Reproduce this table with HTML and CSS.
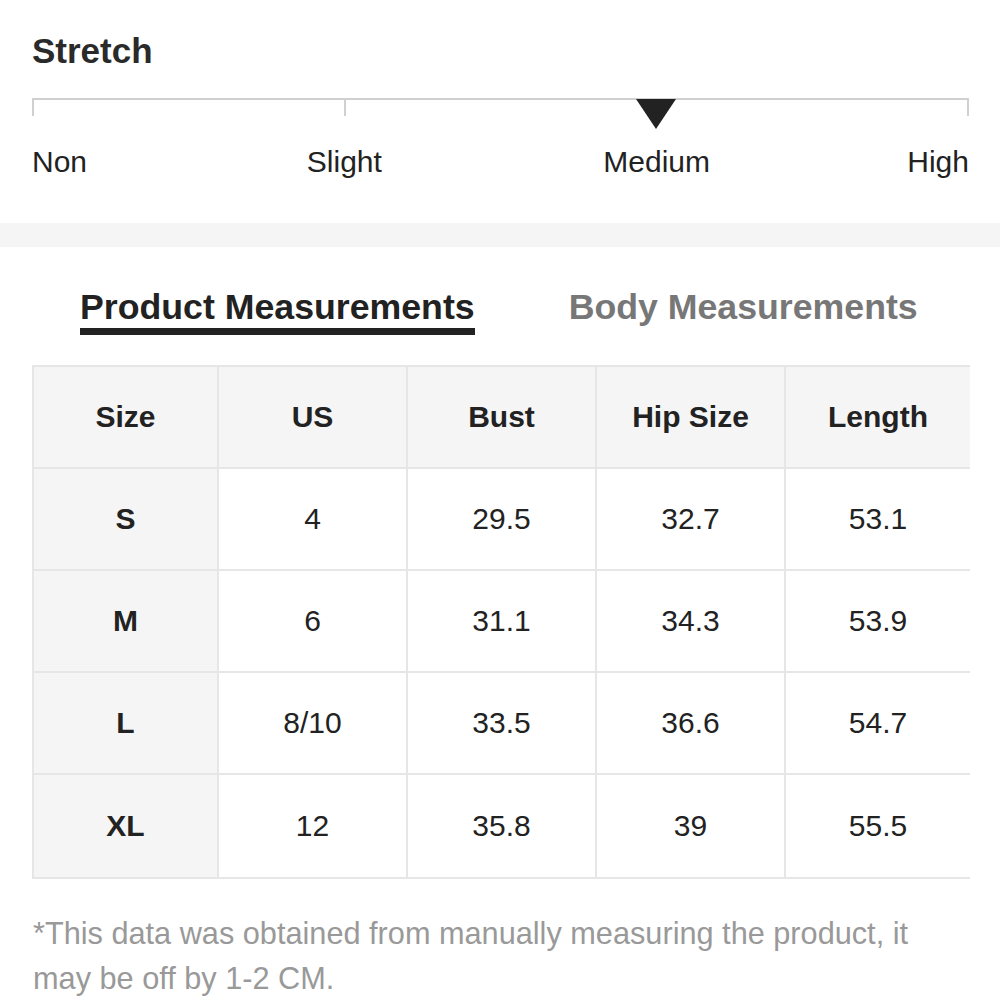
FILE: index.html
```html
<!DOCTYPE html>
<html>
<head>
<meta charset="utf-8">
<link rel="stylesheet" href="styles.css">
</head>
<body>
<section class="stretch">
  <h2 class="title">Stretch</h2>
  <div class="scale">
    <span class="tick"></span>
    <span class="tick"></span>
    <span class="tick active"></span>
    <span class="tick"></span>
  </div>
  <div class="labels">
    <span class="lbl first">Non</span>
    <span class="lbl">Slight</span>
    <span class="lbl">Medium</span>
    <span class="lbl last">High</span>
  </div>
</section>
<div class="band"></div>
<section class="measure">
  <div class="tabs">
    <span class="tab active">Product Measurements</span>
    <span class="tab">Body Measurements</span>
  </div>
  <table class="sizes">
    <colgroup>
      <col class="c1"><col class="c2"><col class="c3"><col class="c4"><col class="c5">
    </colgroup>
    <thead>
      <tr><th>Size</th><th>US</th><th>Bust</th><th>Hip Size</th><th>Length</th></tr>
    </thead>
    <tbody>
      <tr><th>S</th><td>4</td><td>29.5</td><td>32.7</td><td>53.1</td></tr>
      <tr><th>M</th><td>6</td><td>31.1</td><td>34.3</td><td>53.9</td></tr>
      <tr><th>L</th><td>8/10</td><td>33.5</td><td>36.6</td><td>54.7</td></tr>
      <tr><th>XL</th><td>12</td><td>35.8</td><td>39</td><td>55.5</td></tr>
    </tbody>
  </table>
  <p class="note">*This data was obtained from manually measuring the product, it may be off by 1-2 CM.</p>
</section>
</body>
</html>
```
FILE: styles.css
```css
html, body {
  margin: 0;
  padding: 0;
  background: #fff;
}
body {
  font-family: "Liberation Sans", Arial, sans-serif;
  color: #222;
  width: 1000px;
}
.stretch {
  padding: 31px 31px 43px 32px;
}
.title {
  margin: 0;
  font-size: 35px;
  line-height: 40px;
  font-weight: bold;
  color: #2a2a2a;
}
.scale {
  margin-top: 27px;
  height: 44px;
  border-top: 2px solid #d0d0d0;
  display: flex;
  justify-content: space-between;
  align-items: flex-start;
}
.tick {
  width: 2px;
  height: 16px;
  background: #d0d0d0;
}
.tick.active {
  width: 0;
  height: 0;
  background: none;
  border-left: 20px solid transparent;
  border-right: 20px solid transparent;
  border-top: 30px solid #222;
  margin: -1px -19px 0;
}
.labels {
  display: flex;
  justify-content: space-between;
  font-size: 30px;
  line-height: 36px;
  color: #222;
}
.lbl {
  width: 0;
  display: flex;
  justify-content: center;
  white-space: nowrap;
}
.lbl.first { justify-content: flex-start; }
.lbl.last { justify-content: flex-end; }
.band {
  height: 24px;
  background: #f5f5f5;
}
.measure {
  padding: 39px 31px 0 32px;
}
.tabs {
  display: flex;
  padding-left: 48px;
  gap: 94px;
}
.tab {
  font-size: 35.7px;
  line-height: 42px;
  font-weight: bold;
  color: #777;
  white-space: nowrap;
}
.tab.active {
  color: #222;
  border-bottom: 7px solid #222;
}
.sizes {
  margin-top: 30px;
  width: 937px;
  border-collapse: collapse;
  table-layout: fixed;
}
.c1 { width: 185px; }
.c2, .c3, .c4 { width: 189px; }
.c5 { width: 185px; }
.sizes th, .sizes td {
  height: 100px;
  padding: 0;
  border: 2px solid #e6e6e6;
  text-align: center;
  vertical-align: middle;
  font-size: 30px;
  color: #222;
}
.sizes tbody tr:last-child th,
.sizes tbody tr:last-child td {
  height: 102px;
}
.sizes th {
  font-weight: bold;
  background: #f5f5f5;
}
.sizes td {
  font-weight: normal;
  background: #fff;
}
.sizes tr > :last-child {
  border-right: 0;
}
.note {
  margin: 32px 0 0 1px;
  max-width: 900px;
  font-size: 30.7px;
  line-height: 45px;
  color: #999;
}
```
